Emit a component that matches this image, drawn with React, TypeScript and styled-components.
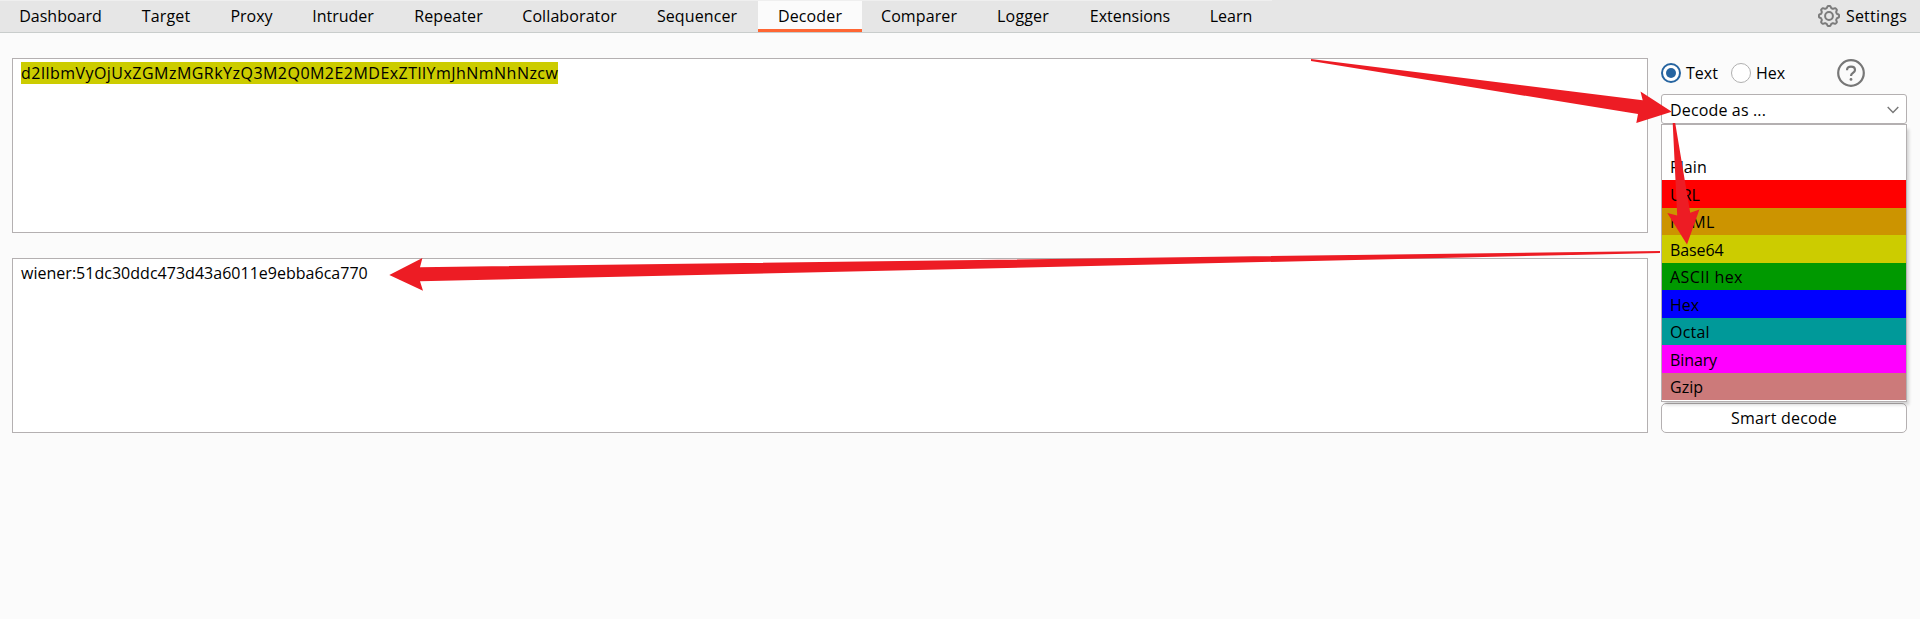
import React from "react";
import styled, { createGlobalStyle } from "styled-components";

const Global = createGlobalStyle`
  * { box-sizing: border-box; }
  body { margin: 0; background: #fbfbfb; font: 16px/22px "Open Sans", "Noto Sans", sans-serif; color: #000; }
`;

const Window = styled.div`
  position: relative;
  display: flex;
  flex-direction: column;
  width: 1920px;
  height: 619px;
  background: #fbfbfb;
  overflow: hidden;
`;

const TabBar = styled.nav`
  display: flex;
  height: 33px;
  flex: none;
  background: #e6e6e6;
  border-bottom: 1px solid #c9cdcc;
`;

const Tab = styled.div<{ $width: number; $active?: boolean }>`
  display: flex;
  justify-content: center;
  align-items: center;
  width: ${(p) => p.$width}px;
  height: 32px;
  padding-top: 2px;
  border-top: 1px solid #efefef;
  border-bottom: ${(p) => (p.$active ? "3px solid #ff6633" : "3px solid transparent")};
  background: ${(p) => (p.$active ? "#fbfbfb" : "transparent")};
`;

const Settings = styled.div`
  display: flex;
  align-items: center;
  gap: 6px;
  margin-left: auto;
  padding-right: 13px;
`;

const Label = styled.span<{ $spacing?: number }>`
  white-space: nowrap;
  letter-spacing: ${(p) => p.$spacing ?? 0}px;
`;

const Body = styled.main`
  display: flex;
  gap: 13px;
  padding: 25px 13px 0 12px;
`;

const Panels = styled.div`
  display: flex;
  flex-direction: column;
  gap: 25px;
  width: 1636px;
`;

const Panel = styled.div`
  height: 175px;
  padding: 3px 8px;
  background: #fff;
  border: 1px solid #b4b0b1;
`;

const Marked = styled(Label)`
  display: inline-block;
  height: 22px;
  background: #cccc00;
`;

const Side = styled.aside`
  position: relative;
  display: flex;
  flex-direction: column;
  width: 246px;
  height: 375px;
`;

const Modes = styled.div`
  display: flex;
  align-items: center;
  height: 30px;
`;

const Radio = styled.span<{ $on?: boolean }>`
  display: flex;
  align-items: center;
  justify-content: center;
  width: 20px;
  height: 20px;
  margin-right: 5px;
  border-radius: 50%;
  background: #fff;
  border: ${(p) => (p.$on ? "2px solid #2664a0" : "1px solid #b0b0b0")};
  &::after {
    content: "";
    width: 10px;
    height: 10px;
    border-radius: 50%;
    background: ${(p) => (p.$on ? "#2664a0" : "transparent")};
  }
`;

const Mode = styled.div<{ $width: number }>`
  display: flex;
  align-items: center;
  width: ${(p) => p.$width}px;
`;

const Select = styled.div`
  display: flex;
  align-items: center;
  justify-content: space-between;
  height: 30px;
  margin-top: 6px;
  padding: 1px 7px 0 8px;
  background: #fff;
  border: 1px solid #b4b0b1;
  border-radius: 3px;
`;

const Menu = styled.div`
  height: 278px;
  border: 1px solid #b4b0b1;
  background: #fff;
  box-shadow: 3px 4px 3px -1px rgba(0, 0, 0, 0.16);
  z-index: 1;
`;

const Option = styled.div<{ $color: string; $tall: boolean }>`
  display: flex;
  align-items: center;
  height: ${(p) => (p.$tall ? 28 : 27)}px;
  padding-top: ${(p) => (p.$tall ? 2 : 0)}px;
  padding-left: 8px;
  background: ${(p) => p.$color};
`;

const Button = styled.div`
  display: flex;
  align-items: center;
  justify-content: center;
  height: 30px;
  margin-top: 1px;
  background: #fff;
  border: 1px solid #b4b0b1;
  border-radius: 5px;
`;

const Overlay = styled.svg`
  position: absolute;
  left: 0;
  top: 0;
  z-index: 2;
  pointer-events: none;
`;

const tabs: { name: string; width: number; spacing?: number }[] = [
  { name: "Dashboard", width: 121 },
  { name: "Target", width: 90, spacing: 0.15 },
  { name: "Proxy", width: 81 },
  { name: "Intruder", width: 102 },
  { name: "Repeater", width: 109, spacing: 0.1 },
  { name: "Collaborator", width: 133, spacing: 0.1 },
  { name: "Sequencer", width: 122, spacing: 0.1 },
  { name: "Decoder", width: 104, spacing: 0.15 },
  { name: "Comparer", width: 114, spacing: 0.1 },
  { name: "Logger", width: 94, spacing: 0.15 },
  { name: "Extensions", width: 120 },
  { name: "Learn", width: 82 },
];

const options: { name: string; color: string; spacing?: number }[] = [
  { name: "", color: "#ffffff" },
  { name: "Plain", color: "#ffffff", spacing: 0.1 },
  { name: "URL", color: "#ff0000" },
  { name: "HTML", color: "#cc9400", spacing: 0.3 },
  { name: "Base64", color: "#cccc00", spacing: -0.1 },
  { name: "ASCII hex", color: "#009900", spacing: 0.4 },
  { name: "Hex", color: "#0000ff" },
  { name: "Octal", color: "#009999", spacing: 0.2 },
  { name: "Binary", color: "#ff00ff", spacing: -0.1 },
  { name: "Gzip", color: "#cc7a7a" },
];

function gearPath() {
  const points: string[] = [];
  for (let i = 0; i <= 96; i++) {
    const a = (i / 96) * Math.PI * 2;
    const r = 9.1 + Math.max(-1, Math.min(1, 1.6 * Math.cos(8 * a))) * 1.0;
    points.push(`${(11 + r * Math.sin(a)).toFixed(2)} ${(11 - r * Math.cos(a)).toFixed(2)}`);
  }
  return `M${points.join("L")}Z`;
}

export default function App() {
  return (
    <Window>
      <Global />
      <TabBar>
        {tabs.map((t) => (
          <Tab key={t.name} $width={t.width} $active={t.name === "Decoder"}>
            <Label $spacing={t.spacing}>{t.name}</Label>
          </Tab>
        ))}
        <Settings>
          <svg width="22" height="22" viewBox="0 0 22 22" fill="none" stroke="#7b7b7b" strokeWidth="2">
            <path d={gearPath()} strokeLinejoin="round" />
            <circle cx="11" cy="11" r="3.9" />
          </svg>
          <Label $spacing={0.22}>Settings</Label>
        </Settings>
      </TabBar>
      <Body>
        <Panels>
          <Panel>
            <Marked $spacing={0.47}>d2llbmVyOjUxZGMzMGRkYzQ3M2Q0M2E2MDExZTllYmJhNmNhNzcw</Marked>
          </Panel>
          <Panel>
            <Label $spacing={0.02}>wiener:51dc30ddc473d43a6011e9ebba6ca770</Label>
          </Panel>
        </Panels>
        <Side>
          <Modes>
            <Mode $width={70}>
              <Radio $on />
              <Label>Text</Label>
            </Mode>
            <Mode $width={106}>
              <Radio />
              <Label>Hex</Label>
            </Mode>
            <svg width="28" height="28" viewBox="0 0 28 28" fill="none" stroke="#777" strokeWidth="2.2">
              <circle cx="14" cy="14" r="12.8" />
              <path d="M10 11.2C10 8.6 11.7 7.6 14 7.6s4 1.2 4 3.3c0 3-4 3.1-4 6" />
              <circle cx="14" cy="20.4" r="1.4" fill="#777" stroke="none" />
            </svg>
          </Modes>
          <Select>
            <Label $spacing={0.15}>Decode as ...</Label>
            <svg width="12" height="8" viewBox="0 0 12 8" fill="none" stroke="#777" strokeWidth="1.4">
              <path d="M0.7 1L6 6.5L11.3 1" />
            </svg>
          </Select>
          <Menu>
            {options.map(({ name, color, spacing }, i) => (
              <Option key={name} $color={color} $tall={i % 2 === 0}>
                <Label $spacing={spacing}>{name}</Label>
              </Option>
            ))}
          </Menu>
          <Button>
            <Label $spacing={0.2}>Smart decode</Label>
          </Button>
        </Side>
      </Body>
      <Overlay width="1920" height="619" viewBox="0 0 1920 619" fill="#ed1c24">
        <path d="M1311 59L1642.7 100.2L1640.5 91.4L1671.8 111.8L1636.3 122.9L1638 114.1L1311 61Z" />
        <path d="M1672.7 123L1675.2 123L1690.2 212.8L1699.4 209.6L1687 244.5L1667.3 213L1677.2 215.4Z" />
        <path d="M1660 251L1660 253L420 281.3L423 290.7L389.3 275L422.4 258L420 267.2Z" />
      </Overlay>
    </Window>
  );
}
